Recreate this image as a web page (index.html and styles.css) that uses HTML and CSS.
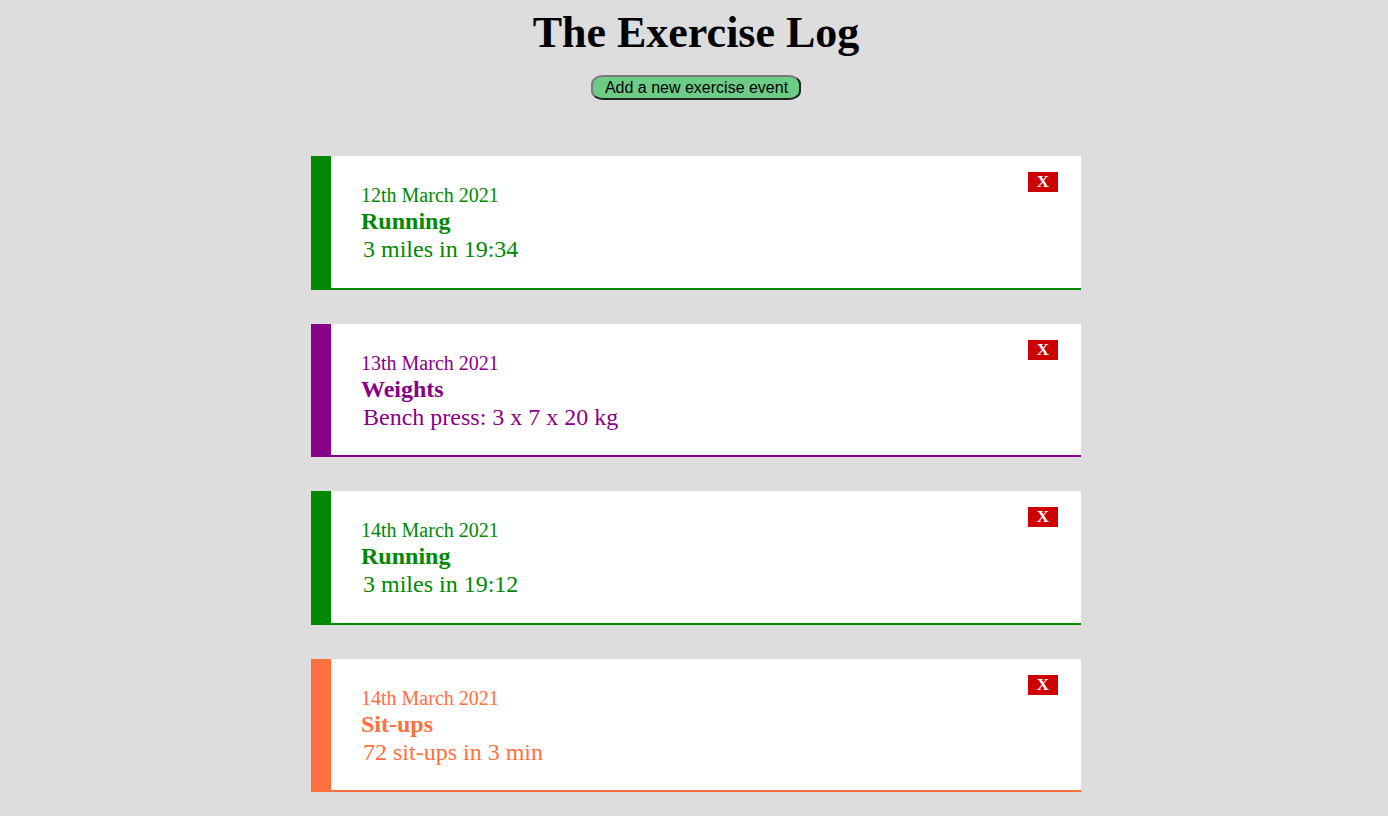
FILE: index.html
```html
<!DOCTYPE html>
<html lang="en">
<head>
<meta charset="utf-8">
<title>The Exercise Log</title>
<link rel="stylesheet" href="styles.css">
</head>
<body>
  <header class="top">
    <h1 class="title">The Exercise Log</h1>
    <button class="add-btn" type="button">Add a new exercise event</button>
  </header>
  <main class="log">
    <article class="card card-running">
      <div class="card-body">
        <div class="card-date">12th March 2021</div>
        <div class="card-type">Running</div>
        <div class="card-detail">3 miles in 19:34</div>
      </div>
      <button class="del-btn" type="button">X</button>
    </article>
    <article class="card card-weights">
      <div class="card-body">
        <div class="card-date">13th March 2021</div>
        <div class="card-type">Weights</div>
        <div class="card-detail">Bench press: 3 x 7 x 20 kg</div>
      </div>
      <button class="del-btn" type="button">X</button>
    </article>
    <article class="card card-running">
      <div class="card-body">
        <div class="card-date">14th March 2021</div>
        <div class="card-type">Running</div>
        <div class="card-detail">3 miles in 19:12</div>
      </div>
      <button class="del-btn" type="button">X</button>
    </article>
    <article class="card card-situps">
      <div class="card-body">
        <div class="card-date">14th March 2021</div>
        <div class="card-type">Sit-ups</div>
        <div class="card-detail">72 sit-ups in 3 min</div>
      </div>
      <button class="del-btn" type="button">X</button>
    </article>
  </main>
</body>
</html>
```
FILE: styles.css
```css
html, body {
  margin: 0;
  padding: 0;
}
body {
  background: #dddddd;
  font-family: "Liberation Serif", "Times New Roman", serif;
  color: #000;
  padding-left: 4px;
}
.top {
  display: flex;
  flex-direction: column;
  align-items: center;
  padding-top: 5px;
}
.title {
  margin: 0;
  font-size: 44px;
  line-height: 55px;
  font-weight: bold;
}
.add-btn {
  margin-top: 15px;
  font-family: "Liberation Sans", Arial, sans-serif;
  font-size: 16px;
  line-height: 19px;
  padding: 1px 11px 1px 12px;
  background: #6ccb85;
  color: #000;
  border: 2px solid;
  border-color: #7a7a7a #222 #222 #7a7a7a;
  border-radius: 12px / 9px;
}
.log {
  display: flex;
  flex-direction: column;
  align-items: center;
  gap: 34px;
  padding-top: 56px;
  padding-bottom: 24px;
}
.card {
  box-sizing: border-box;
  width: 770px;
  display: flex;
  justify-content: space-between;
  align-items: flex-start;
  background: #fff;
  border-left: 20px solid;
  border-bottom: 2px solid;
  padding: 16px 23px 24.5px 30px;
}
.card-running { border-color: #008800; color: #008800; }
.card-weights { border-color: #880088; color: #880088; }
.card-situps { border-color: #ff7040; color: #ff7040; }
.card-body {
  padding-top: 11px;
}
.card-date {
  font-size: 20px;
  line-height: 24px;
}
.card-type {
  font-size: 24px;
  line-height: 28px;
  font-weight: bold;
}
.card-detail {
  font-size: 24px;
  line-height: 28px;
  padding-left: 2px;
}
.del-btn {
  width: 30px;
  height: 20px;
  padding: 0;
  border: none;
  background: #cc0000;
  color: #fff;
  font-family: "Liberation Serif", "Times New Roman", serif;
  font-size: 17px;
  line-height: 20px;
  font-weight: bold;
}
```
